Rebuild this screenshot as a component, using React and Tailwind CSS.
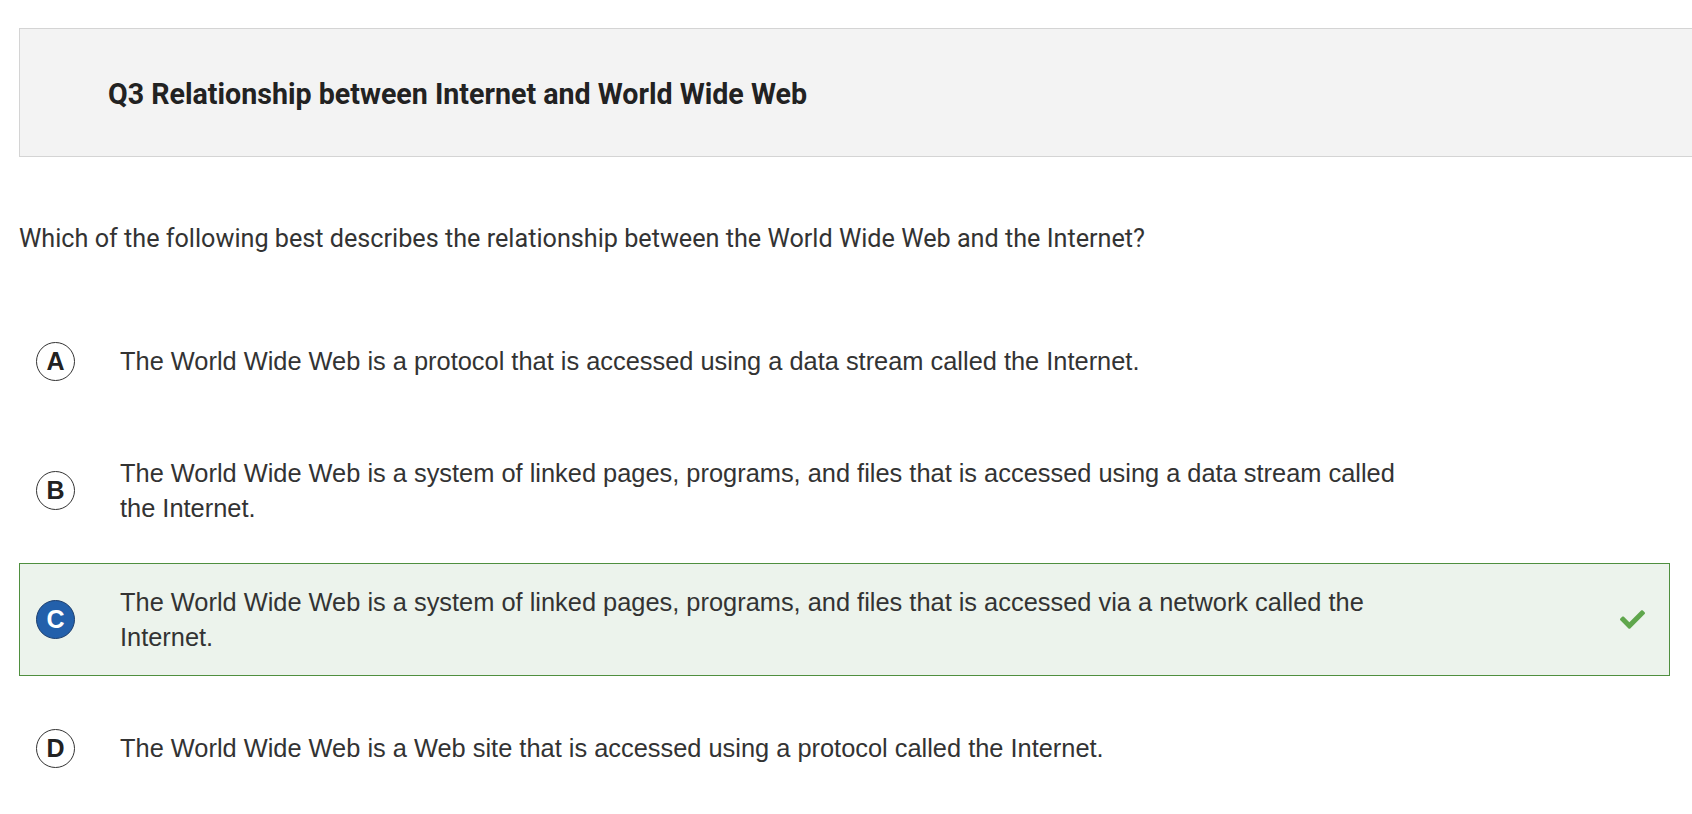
import React from "react";
import { FaCheck } from "react-icons/fa";

const options = [
  { key: "A", text: "The World Wide Web is a protocol that is accessed using a data stream called the Internet." },
  { key: "B", text: "The World Wide Web is a system of linked pages, programs, and files that is accessed using a data stream called the Internet." },
  { key: "C", text: "The World Wide Web is a system of linked pages, programs, and files that is accessed via a network called the Internet.", correct: true },
  { key: "D", text: "The World Wide Web is a Web site that is accessed using a protocol called the Internet." },
];

const Option = ({ item }) => {
  const selected = item.correct;
  return (
    <div
      className={
        "flex h-[113px] items-center border pl-4 pr-6 " +
        (selected ? "border-[#4f8f3f] bg-[#ecf3ec]" : "border-transparent")
      }
    >
      {/* letter bubble */}
      <div
        className={
          "flex h-[39px] w-[39px] shrink-0 items-center justify-center rounded-full border text-[25px] font-bold " +
          (selected ? "border-[#1d3f6e] bg-[#2360ab] text-white" : "border-[#333] bg-white text-[#222]")
        }
      >
        {item.key}
      </div>
      <p className="ml-[45px] w-[1290px] text-[25.4px] leading-[35px] text-[#333]">{item.text}</p>
      <div className="flex-1" />
      {selected && <FaCheck className="text-[25px] text-[#5fa64c]" />}
    </div>
  );
};

export default function App() {
  return (
    <div className="h-[814px] w-full overflow-hidden bg-white font-['Liberation_Sans',Arial,sans-serif]">
      <div className="pl-[19px] pt-[28px]">
        {/* Title bar */}
        <div className="flex h-[129px] w-[1700px] items-center border border-[#d4d4d4] bg-[#f3f3f3] pl-[88px] pt-[4px]">
          <h1 className="font-['Roboto',sans-serif] text-[28.6px] font-bold text-[#222]">
            Q3 Relationship between Internet and World Wide Web
          </h1>
        </div>

        <p className="mt-[66px] font-['Roboto',sans-serif] text-[25.2px] leading-[32px] text-[#333]">
          Which of the following best describes the relationship between the World Wide Web and the Internet?
        </p>

        <div className="mt-[50px] flex w-[1651px] flex-col gap-4">
          {options.map((o) => (
            <Option key={o.key} item={o} />
          ))}
        </div>
      </div>
    </div>
  );
}
